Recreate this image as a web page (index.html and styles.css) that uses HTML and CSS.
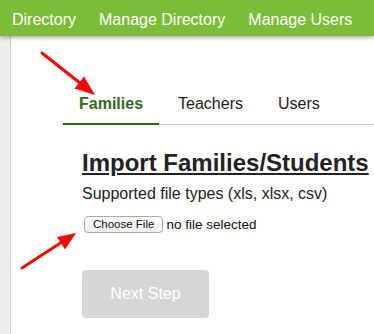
FILE: index.html
```html
<!DOCTYPE html>
<html lang="en">
<head>
    <meta charset="UTF-8">
    <title>Import Families</title>
    <link rel="stylesheet" href="styles.css">
</head>
<body>

    <div class="topbar">
        <a href="#" class="topbar-item">Directory</a>
        <a href="#" class="topbar-item">Manage Directory</a>
        <a href="#" class="topbar-item">Manage Users</a>
    </div>

    <div class="pagina">
        <div class="lateral"></div>

        <div class="conteudo">
            <div class="abas">
                <a href="#" class="aba ativa">Families</a>
                <a href="#" class="aba">Teachers</a>
                <a href="#" class="aba">Users</a>
            </div>

            <div class="importar">
                <h2>Import Families/Students</h2>
                <p class="tipos">Supported file types (xls, xlsx, csv)</p>
                <div class="arquivo">
                    <label class="escolher">Choose File</label>
                    <span class="nenhum">no file selected</span>
                </div>
                <button class="proximo" disabled>Next Step</button>
            </div>
        </div>
    </div>

    <!-- setas vermelhas da captura -->
    <svg class="setas" width="374" height="334" viewBox="0 0 374 334">
        <line x1="42" y1="53" x2="80" y2="83" stroke="#ff0000" stroke-width="3" stroke-linecap="round"/>
        <polygon points="95,95 74.5,88.5 84,76.5" fill="#ff0000"/>
        <line x1="22" y1="268" x2="62" y2="242" stroke="#ff0000" stroke-width="3" stroke-linecap="round"/>
        <polygon points="76,233 65,249.5 57,237" fill="#ff0000"/>
    </svg>

</body>
</html>
```

FILE: styles.css
```css
body {
    margin: 0;
    font-family: "Liberation Sans", Arial, sans-serif;
    color: #222;
    background-color: #fff;
    overflow: hidden;
}

/* Barra verde do topo */
.topbar {
    display: flex;
    height: 36px;
    align-items: center;
    background-color: #7cbd37;
    box-shadow: 0 2px 4px rgba(0, 0, 0, 0.3);
    position: relative;
    z-index: 1;
}

.topbar-item {
    padding: 0 11px 0 12px;
    font-size: 16px;
    line-height: 18px;
    color: #fff;
    text-decoration: none;
    white-space: nowrap;
    padding-top: 3px;
}

.pagina {
    display: flex;
    height: 298px;
}

.lateral {
    width: 10px;
    background-color: #eeeeec;
    border-right: 1px solid #d4d4d4;
}

.conteudo {
    flex: 1;
    padding-top: 59px;
}

/* Abas */
.abas {
    display: flex;
    margin-left: 50px;
    border-bottom: 1px solid #c9c9c9;
}

.aba {
    padding: 0 16px 10px;
    margin-left: 3px;
    margin-bottom: -1px;
    font-size: 16px;
    line-height: 18px;
    color: #222;
    text-decoration: none;
    border-bottom: 2px solid transparent;
}

.aba.ativa {
    margin-left: 2px;
    font-weight: bold;
    color: #2f6b1c;
    border-bottom-color: #2f6b1c;
}

/* Bloco de importacao */
.importar {
    padding-left: 71px;
}

.importar h2 {
    margin: 24px 0 0;
    font-size: 24px;
    line-height: 28px;
    white-space: nowrap;
    text-decoration: underline;
    text-underline-offset: 2px;
}

.tipos {
    margin: 8px 0 0;
    font-size: 16px;
    line-height: 18px;
}

.arquivo {
    display: flex;
    align-items: center;
    margin-top: 13px;
    margin-left: 2px;
}

.escolher {
    height: 15px;
    padding: 0 8px;
    border: 1px solid #a9a9a9;
    border-radius: 4px;
    background: linear-gradient(#ffffff, #f0f0f0);
    font-size: 11.5px;
    line-height: 15px;
    color: #111;
}

.nenhum {
    margin-left: 3px;
    font-size: 13.5px;
    color: #111;
}

.proximo {
    display: block;
    width: 127px;
    height: 48px;
    margin-top: 37px;
    border: none;
    border-radius: 4px;
    background-color: #d6d6d6;
    color: #fff;
    font-family: "Liberation Sans", Arial, sans-serif;
    font-size: 16px;
}

/* Setas por cima de tudo */
.setas {
    position: absolute;
    top: 0;
    left: 0;
    z-index: 2;
}
```
